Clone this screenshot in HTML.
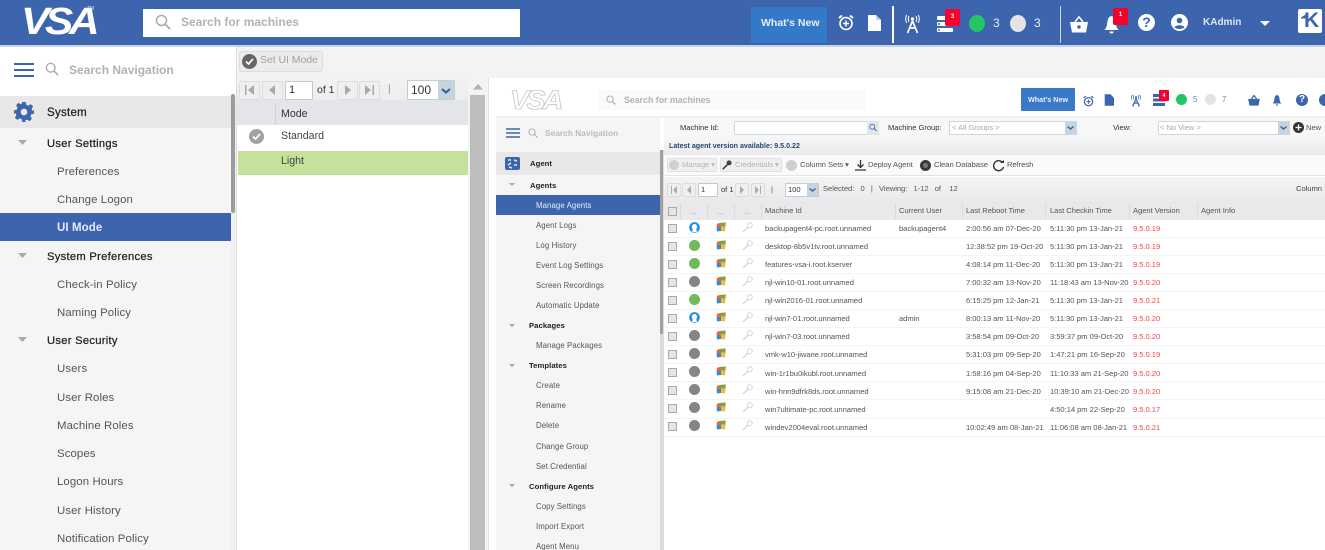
<!DOCTYPE html>
<html><head><meta charset="utf-8"><title>VSA UI Mode</title>
<style>
html,body{margin:0;padding:0;width:1325px;height:550px;overflow:hidden;background:#fff}
body{font-family:"Liberation Sans",sans-serif;position:relative}
#all{position:absolute;left:0;top:0;width:1325px;height:550px;overflow:hidden;filter:blur(.25px)}
#inner{position:absolute;left:0;top:0;width:1325px;height:550px;overflow:hidden;filter:blur(.38px)}
.b{position:absolute}
.t{position:absolute;white-space:nowrap;line-height:16px;height:16px}
.n{font-size:11.4px;color:#555;letter-spacing:.1px;margin-top:1px}
.h{font-size:11.2px;color:#222;font-weight:500;letter-spacing:.28px;-webkit-text-stroke:.25px #222;margin-top:1px}
.i{font-size:7.8px;color:#555;letter-spacing:.1px}
.ih{font-size:7.7px;color:#222;font-weight:bold;letter-spacing:.05px}
.s{font-size:7.6px;color:#555;letter-spacing:-.04px}
.v{color:#f2454a}
svg{position:absolute;overflow:visible}
.pb{position:absolute;background:#efefef;border:1px solid #ddd;border-radius:2px;box-sizing:border-box}
.rowi{position:absolute;left:664px;width:661px;height:1px;background:#f4f4f4}
.cb{position:absolute;left:668px;width:9px;height:9px;background:#e4e4e4;border:1px solid #aaa;box-sizing:border-box}
.dot{position:absolute;left:689px;width:11px;height:11px;border-radius:50%}
.sep{position:absolute;top:203px;width:1px;height:17px;background:#dcdcde}
#rows .t{margin-top:1px}
#rows .cb{margin-top:-1px}
</style></head>
<body>
<svg width="0" height="0" style="position:absolute"><defs>
<symbol id="flag" viewBox="0 0 10 10"><path d="M1 1.800 5 .8 5 4.800 .5 5.300Z" fill="#e8683a"/><path d="M5 .8 9.800 .5 9.500 4.500 5 4.800Z" fill="#7fa845"/><path d="M.5 5.300 5 4.800 5 9 1 9.500Z" fill="#3f86d8"/><path d="M5 4.800 9.500 4.500 9 9.500 5 9Z" fill="#f0bd3a"/></symbol>
<symbol id="key" viewBox="0 0 12 12"><circle cx="8.500" cy="3.500" r="2.800" fill="#fff" stroke="#d4d4d4" stroke-width="1"/><path d="M6.500 5.500 1 11" stroke="#d4d4d4" stroke-width="1.400"/></symbol>
<symbol id="mag" viewBox="0 0 16 16"><circle cx="6.500" cy="6.500" r="5" fill="none" stroke="currentColor" stroke-width="1.500"/><path d="M10.200 10.200 15 15" stroke="currentColor" stroke-width="1.800"/></symbol>
<symbol id="user" viewBox="0 0 12 12"><circle cx="6" cy="6" r="5.800" fill="#1d8fe8"/><circle cx="6" cy="5.200" r="3" fill="#fff"/><path d="M3.500 11 4 7.500H8L8.500 11Z" fill="#fff"/></symbol>
</defs></svg>
<div id="all">

<!-- Top bar -->
<div class="b" style="left:0;top:0;width:1325px;height:45px;background:#3c65ae"></div>
<div class="b" style="left:0;top:45px;width:1325px;height:2px;background:#8fa8d2;opacity:.5"></div>
<div class="t" style="left:21px;top:7px;height:30px;line-height:30px;font-size:38px;font-weight:bold;font-style:italic;color:#fff;letter-spacing:-4px;transform-origin:0 50%;transform:scaleX(1.12)">VSA</div>
<div class="t" style="left:87px;top:6px;font-size:5px;line-height:6px;height:6px;color:#d6e0f0">TM</div>
<div class="b" style="left:143px;top:9px;width:377px;height:28px;background:#fff"></div>
<svg style="left:155px;top:14px;color:#aaa" width="16" height="16"><use href="#mag"/></svg>
<div class="t" style="left:181px;top:14px;font-size:12px;font-weight:bold;color:#b2b2b2">Search for machines</div>

<div class="b" style="left:751px;top:7px;width:76px;height:36px;background:#3478c8;border-radius:1px"></div>
<div class="t" style="left:761px;top:15px;font-size:10.500px;font-weight:bold;color:#e8effa">What's New</div>
<svg style="left:838px;top:14px" width="16" height="17" viewBox="0 0 16 17"><circle cx="8" cy="9.500" r="6" fill="none" stroke="#fff" stroke-width="1.600"/><path d="M8 6.500v6M5 9.500h6" stroke="#fff" stroke-width="1.500"/><path d="M1 4 4 1.500M15 4 12 1.500" stroke="#fff" stroke-width="1.800"/></svg>
<svg style="left:867px;top:15px" width="14" height="16" viewBox="0 0 14 16"><path d="M1 0H9L14 5V16H1Z" fill="#fff"/><path d="M9 0V5H14" fill="#c6d3e9"/></svg>
<div class="b" style="left:892px;top:6px;width:1.500px;height:37px;background:#fff"></div>
<svg style="left:905px;top:14px" width="15" height="20" viewBox="0 0 15 20"><path d="M7.500 7 2.500 19M7.500 7l5 12M4.500 14h6" stroke="#fff" stroke-width="1.700" fill="none"/><circle cx="7.500" cy="5" r="1.700" fill="#fff"/><path d="M4 2Q2.700 5 4 8M11 2Q12.300 5 11 8M1.700 1Q-.3 5 1.700 9M13.300 1Q15.300 5 13.300 9" stroke="#fff" fill="none" stroke-width="1"/></svg>
<svg style="left:937px;top:16px" width="16" height="17" viewBox="0 0 16 17"><rect y="0" width="16" height="4" rx="1" fill="#fff"/><rect y="6" width="16" height="4" rx="1" fill="#fff"/><rect y="12" width="16" height="4" rx="1" fill="#fff"/><circle cx="2" cy="8" r="1" fill="#3c65ae"/><circle cx="2" cy="14" r="1" fill="#3c65ae"/></svg>
<div class="b" style="left:945px;top:9px;width:15px;height:17px;background:#f5002f;border-radius:2px"></div>
<div class="t" style="left:945px;top:10px;width:15px;text-align:center;font-size:6px;font-weight:bold;color:#fff;line-height:14px">3</div>
<div class="b" style="left:969px;top:15px;width:16px;height:17px;border-radius:50%;background:#22c662"></div>
<div class="t" style="left:993px;top:15px;font-size:12px;color:#e8effa">3</div>
<div class="b" style="left:1010px;top:15px;width:16px;height:17px;border-radius:50%;background:#e4e4e4"></div>
<div class="t" style="left:1034px;top:15px;font-size:12px;color:#e8effa">3</div>
<div class="b" style="left:1060px;top:6px;width:1px;height:37px;background:#c9d6ec"></div>
<svg style="left:1070px;top:16px" width="18" height="17" viewBox="0 0 18 17"><path d="M0 6H18L16 16.500H2Z" fill="#fff"/><path d="M5 6 9 .8 13 6" fill="none" stroke="#fff" stroke-width="1.500"/><circle cx="9" cy="11" r="1.700" fill="#3c65ae"/></svg>
<svg style="left:1104px;top:16px" width="15" height="18" viewBox="0 0 15 18"><path d="M7.500 0C3.500 1 3.500 5 3 9 2.700 11 1.500 12.500.5 14H14.500C13.500 12.500 12.300 11 12 9 11.500 5 11.500 1 7.500 0Z" fill="#fff"/><path d="M5.500 15.500a2 2 0 0 0 4 0Z" fill="#fff"/></svg>
<div class="b" style="left:1113px;top:8px;width:15px;height:17px;background:#f5002f;border-radius:2px"></div>
<div class="t" style="left:1113px;top:8px;width:15px;text-align:center;font-size:6px;font-weight:bold;color:#fff;line-height:15px">1</div>
<div class="b" style="left:1138px;top:14px;width:17px;height:17px;border-radius:50%;background:#fff"></div>
<div class="t" style="left:1138px;top:14px;width:17px;text-align:center;font-size:14px;font-weight:bold;color:#3c65ae;line-height:17px;height:17px">?</div>
<svg style="left:1171px;top:14px" width="17" height="17" viewBox="0 0 17 17"><circle cx="8.500" cy="8.500" r="8.500" fill="#fff"/><circle cx="8.500" cy="6.500" r="2.800" fill="#3c65ae"/><path d="M3.500 13.500C4.500 10.500 12.500 10.500 13.500 13.500 11 15.500 6 15.500 3.500 13.500Z" fill="#3c65ae"/></svg>
<div class="t" style="left:1203px;top:15px;font-size:10px;font-weight:bold;color:#dfe7f4">KAdmin</div>
<svg style="left:1260px;top:21px" width="10" height="6"><path d="M0 0H10L5 5Z" fill="#fff"/></svg>
<div class="b" style="left:1298px;top:9px;width:24px;height:24px;background:#fff;border-radius:2px"></div>
<svg style="left:1301px;top:14px" width="6" height="5"><path d="M0 3.500 5.500 0V4.500H0Z" fill="#3c65ae"/></svg>
<div class="t" style="left:1304px;top:11px;height:20px;line-height:20px;font-size:21px;font-weight:bold;color:#3c65ae">K</div>

<!-- Left nav -->
<div class="b" style="left:0;top:47px;width:231px;height:503px;background:#f5f5f5"></div>
<div class="b" style="left:0;top:47px;width:236px;height:49px;background:#fff"></div>
<svg style="left:14px;top:63px" width="20" height="14"><path d="M0 1H20M0 7H20M0 13H20" stroke="#3c65ae" stroke-width="2"/></svg>
<svg style="left:45px;top:62px;color:#aaa" width="14" height="14"><use href="#mag"/></svg>
<div class="t" style="left:69px;top:62px;font-size:12px;font-weight:bold;color:#b2b2b2">Search Navigation</div>
<div class="b" style="left:0;top:96px;width:231px;height:32px;background:#e8e8e8"></div>
<svg style="left:14px;top:102px" width="20" height="20" viewBox="0 0 24 24"><path fill="#3c65ae" fill-rule="evenodd" d="M10 0h4l.7 3.300 2.500 1 2.900-1.800 2.800 2.800-1.800 2.900 1 2.500L24 10v4l-3.300.7-1 2.500 1.800 2.900-2.800 2.800-2.900-1.800-2.500 1L14 24h-4l-.7-3.300-2.500-1-2.900 1.800-2.800-2.800 1.800-2.900-1-2.500L0 14v-4l3.300-.7 1-2.500L2.500 3.900 5.300 1.100l2.900 1.800 1.100-.9ZM12 8a4 4 0 1 0 0 8 4 4 0 0 0 0-8Z"/></svg>
<div class="t h" style="left:47px;top:104px;font-size:11.500px">System</div>
<svg style="left:18px;top:140px" width="9" height="5"><path d="M0 0H9L4.500 5Z" fill="#aaa"/></svg>
<div class="t h" style="left:47px;top:135px">User Settings</div>
<div class="t n" style="left:57px;top:163px">Preferences</div>
<div class="t n" style="left:57px;top:191px">Change Logon</div>
<div class="b" style="left:0;top:213px;width:231px;height:28px;background:#3c65ae"></div>
<div class="t n" style="left:57px;top:219px;color:#e4ebf7;font-weight:bold;font-size:11.500px">UI Mode</div>
<svg style="left:18px;top:253px" width="9" height="5"><path d="M0 0H9L4.500 5Z" fill="#aaa"/></svg>
<div class="t h" style="left:47px;top:248px">System Preferences</div>
<div class="t n" style="left:57px;top:276px">Check-in Policy</div>
<div class="t n" style="left:57px;top:304px">Naming Policy</div>
<svg style="left:18px;top:337px" width="9" height="5"><path d="M0 0H9L4.500 5Z" fill="#aaa"/></svg>
<div class="t h" style="left:47px;top:332px">User Security</div>
<div class="t n" style="left:57px;top:360px">Users</div>
<div class="t n" style="left:57px;top:389px">User Roles</div>
<div class="t n" style="left:57px;top:417px">Machine Roles</div>
<div class="t n" style="left:57px;top:445px">Scopes</div>
<div class="t n" style="left:57px;top:473px">Logon Hours</div>
<div class="t n" style="left:57px;top:502px">User History</div>
<div class="t n" style="left:57px;top:530px">Notification Policy</div>
<div class="b" style="left:231px;top:96px;width:5px;height:454px;background:#f0f0f0"></div>
<div class="b" style="left:231px;top:94px;width:4px;height:119px;background:#9c9c9c;border-radius:2px"></div>

<!-- Middle panel -->
<div class="b" style="left:236px;top:47px;width:1089px;height:31px;background:#f3f3f3"></div>
<div class="b" style="left:236px;top:47px;width:1px;height:503px;background:#ddd"></div>
<div class="b" style="left:239px;top:51px;width:84px;height:21px;background:#ececec;border:1px solid #dcdcdc;border-radius:3px;box-sizing:border-box"></div>
<div class="b" style="left:242px;top:54px;width:15px;height:15px;border-radius:50%;background:#666"></div>
<svg style="left:245px;top:58px" width="9" height="7"><path d="M1 3.500 3.500 6 8 1" stroke="#fff" stroke-width="1.700" fill="none"/></svg>
<div class="t" style="left:260px;top:52px;font-size:10.500px;color:#a0a0a0;letter-spacing:-.05px">Set UI Mode</div>

<div class="b" style="left:237px;top:78px;width:233px;height:47px;background:linear-gradient(#f2f2f2,#e8e8ea)"></div>
<div class="pb" style="left:239px;top:81px;width:21px;height:19px"></div>
<div class="pb" style="left:262px;top:81px;width:21px;height:19px"></div>
<div class="pb" style="left:337px;top:81px;width:21px;height:19px"></div>
<div class="pb" style="left:359px;top:81px;width:21px;height:19px"></div>
<svg style="left:245px;top:85px" width="10" height="11"><path d="M0 0H1.500V10H0ZM9 0V10L3 5Z" fill="#a8a8a8"/></svg>
<svg style="left:269px;top:85px" width="7" height="11"><path d="M6 0V10L0 5Z" fill="#a8a8a8"/></svg>
<svg style="left:345px;top:85px" width="7" height="11"><path d="M0 0V10L6 5Z" fill="#a8a8a8"/></svg>
<svg style="left:365px;top:85px" width="10" height="11"><path d="M0 0V10L6 5ZM7.500 0H9V10H7.500Z" fill="#a8a8a8"/></svg>
<div class="b" style="left:285px;top:81px;width:28px;height:19px;background:#fff;border:1px solid #c8c8c8;box-sizing:border-box"></div>
<div class="t" style="left:289px;top:82px;font-size:11px;color:#333">1</div>
<div class="t" style="left:317px;top:82px;font-size:10.500px;color:#333">of 1</div>
<div class="t" style="left:388px;top:82px;font-size:10px;color:#888">|</div>
<div class="b" style="left:407px;top:80px;width:48px;height:20px;background:#fff;border:1px solid #c3cdd8;box-sizing:border-box"></div>
<div class="b" style="left:438px;top:81px;width:16px;height:18px;background:#c8d4dd"></div>
<svg style="left:441px;top:88px" width="10" height="6"><path d="M1 1 5 4.500 9 1" stroke="#2a5ea8" stroke-width="2" fill="none"/></svg>
<div class="t" style="left:411px;top:82px;font-size:12px;color:#333">100</div>
<div class="b" style="left:238px;top:100px;width:230px;height:25px;background:#e4e5e8"></div>
<div class="b" style="left:275px;top:103px;width:1px;height:22px;background:#d2d2d4"></div>
<div class="t" style="left:281px;top:106px;font-size:10.600px;color:#333">Mode</div>
<div class="b" style="left:238px;top:125px;width:230px;height:26px;background:#fff"></div>
<div class="b" style="left:249px;top:129px;width:15px;height:15px;border-radius:50%;background:#a2a2a2"></div>
<svg style="left:252px;top:133px" width="9" height="7"><path d="M1 3.500 3.500 6 8 1" stroke="#fff" stroke-width="1.700" fill="none"/></svg>
<div class="t" style="left:281px;top:128px;font-size:10.600px;color:#444">Standard</div>
<div class="b" style="left:238px;top:151px;width:230px;height:24px;background:#c4e29b"></div>
<div class="t" style="left:281px;top:153px;font-size:10.600px;color:#444">Light</div>
<div class="b" style="left:238px;top:175px;width:230px;height:375px;background:#fff"></div>
<div class="b" style="left:468px;top:78px;width:20px;height:472px;background:#f3f3f3"></div>
<svg style="left:473px;top:84px" width="10" height="6"><path d="M0 5.500 5 0 10 5.500Z" fill="#b0b0b0"/></svg>
<div class="b" style="left:470px;top:95px;width:15px;height:455px;background:#bdbdbd"></div>
<div class="b" style="left:488px;top:78px;width:1px;height:472px;background:#dfdfdf"></div>
<div class="b" style="left:489px;top:78px;width:836px;height:472px;background:#fff"></div>

<div id="inner">
<!-- Inner top -->
<div class="t" style="left:510px;top:88px;height:24px;line-height:24px;font-size:27px;font-weight:bold;font-style:italic;color:#fff;letter-spacing:-3px;-webkit-text-stroke:.8px #c8c8c8;transform-origin:0 50%;transform:scaleX(1.08)">VSA</div>
<div class="b" style="left:598px;top:90px;width:268px;height:20px;background:#fafafa"></div>
<svg style="left:606px;top:95px;color:#aaa" width="10" height="10"><use href="#mag"/></svg>
<div class="t" style="left:624px;top:92px;font-size:8.800px;font-weight:bold;color:#b2b2b2">Search for machines</div>
<div class="b" style="left:1021px;top:88px;width:54px;height:23px;background:#3a78c8;border-radius:1px"></div>
<div class="t" style="left:1028px;top:92px;font-size:7.200px;font-weight:bold;color:#e8effa">What's New</div>
<svg style="left:1083px;top:95px" width="11" height="12" viewBox="0 0 16 17"><circle cx="8" cy="9.500" r="6" fill="none" stroke="#3c65ae" stroke-width="1.800"/><path d="M8 6.500v6M5 9.500h6" stroke="#3c65ae" stroke-width="1.500"/><path d="M1 4 4 1.500M15 4 12 1.500" stroke="#3c65ae" stroke-width="1.800"/></svg>
<svg style="left:1104px;top:94px" width="10" height="12" viewBox="0 0 14 16"><path d="M1 0H9L14 5V16H1Z" fill="#3c65ae"/></svg>
<svg style="left:1131px;top:94px" width="10" height="13" viewBox="0 0 15 20"><path d="M7.500 7 2.500 19M7.500 7l5 12M4.500 14h6" stroke="#3c65ae" stroke-width="2" fill="none"/><circle cx="7.500" cy="5" r="1.700" fill="#3c65ae"/><path d="M4 2Q2.700 5 4 8M11 2Q12.300 5 11 8M1.700 1Q-.3 5 1.700 9M13.300 1Q15.300 5 13.300 9" stroke="#3c65ae" fill="none" stroke-width="1.200"/></svg>
<svg style="left:1153px;top:94px" width="12" height="12" viewBox="0 0 16 16"><rect y="0" width="16" height="4" fill="#3c65ae"/><rect y="6" width="16" height="4" fill="#3c65ae"/><rect y="12" width="16" height="4" fill="#3c65ae"/></svg>
<div class="b" style="left:1159px;top:90px;width:10px;height:11px;background:#f5002f;border-radius:1px"></div>
<div class="t" style="left:1159px;top:88px;width:10px;text-align:center;font-size:5px;font-weight:bold;color:#fff">4</div>
<div class="b" style="left:1176px;top:94px;width:11px;height:11px;border-radius:50%;background:#22c662"></div>
<div class="t" style="left:1193px;top:92px;font-size:8px;color:#6a86bb">5</div>
<div class="b" style="left:1205px;top:94px;width:11px;height:11px;border-radius:50%;background:#e4e4e4"></div>
<div class="t" style="left:1222px;top:92px;font-size:8px;color:#6a86bb">7</div>
<svg style="left:1248px;top:95px" width="12" height="11" viewBox="0 0 18 17"><path d="M0 6H18L16 16.500H2Z" fill="#3c65ae"/><path d="M5 6 9 .8 13 6" fill="none" stroke="#3c65ae" stroke-width="2"/></svg>
<svg style="left:1272px;top:95px" width="10" height="11" viewBox="0 0 15 18"><path d="M7.500 0C3.500 1 3.500 5 3 9 2.700 11 1.500 12.500.5 14H14.500C13.500 12.500 12.300 11 12 9 11.500 5 11.500 1 7.500 0Z" fill="#3c65ae"/><path d="M5.500 15.500a2 2 0 0 0 4 0Z" fill="#3c65ae"/></svg>
<div class="b" style="left:1296px;top:94px;width:12px;height:12px;border-radius:50%;background:#3c65ae"></div>
<div class="t" style="left:1296px;top:92px;width:12px;text-align:center;font-size:10px;font-weight:bold;color:#fff">?</div>
<div class="b" style="left:1319px;top:94px;width:12px;height:12px;border-radius:50%;background:#3c65ae"></div>
<div class="b" style="left:496px;top:116px;width:829px;height:2px;background:#f1f1f1"></div>

<!-- Inner nav -->
<div class="b" style="left:496px;top:118px;width:164px;height:432px;background:#f5f5f5"></div>
<svg style="left:506px;top:128px" width="14" height="10"><path d="M0 1H14M0 5H14M0 9H14" stroke="#3c65ae" stroke-width="1.500"/></svg>
<svg style="left:528px;top:128px;color:#aaa" width="10" height="10"><use href="#mag"/></svg>
<div class="t" style="left:545px;top:125px;font-size:8.400px;font-weight:bold;color:#bbb">Search Navigation</div>
<div class="b" style="left:496px;top:152px;width:164px;height:23px;background:#e8e8e8"></div>
<div class="b" style="left:505px;top:157px;width:15px;height:13px;background:#3c65ae;border-radius:2px"></div>
<svg style="left:505px;top:157px" width="15" height="13"><path d="M3 3H6M9 3 12 4M3 8 6 6M9 8H12M4 10 7 11" stroke="#dfe7f5" stroke-width="1.500"/></svg>
<div class="t ih" style="left:530px;top:156px">Agent</div>
<svg style="left:509px;top:183px" width="6" height="3"><path d="M0 0H6L3 3Z" fill="#aaa"/></svg>
<div class="t ih" style="left:530px;top:178px">Agents</div>
<div class="b" style="left:496px;top:195px;width:164px;height:20px;background:#3c65ae"></div>
<div class="t i" style="left:536px;top:198px;color:#e4ebf7">Manage Agents</div>
<div class="t i" style="left:536px;top:218px">Agent Logs</div>
<div class="t i" style="left:536px;top:238px">Log History</div>
<div class="t i" style="left:536px;top:258px">Event Log Settings</div>
<div class="t i" style="left:536px;top:278px">Screen Recordings</div>
<div class="t i" style="left:536px;top:298px">Automatic Update</div>
<svg style="left:509px;top:324px" width="6" height="3"><path d="M0 0H6L3 3Z" fill="#aaa"/></svg>
<div class="t ih" style="left:529px;top:318px">Packages</div>
<div class="t i" style="left:536px;top:338px">Manage Packages</div>
<svg style="left:509px;top:364px" width="6" height="3"><path d="M0 0H6L3 3Z" fill="#aaa"/></svg>
<div class="t ih" style="left:529px;top:358px">Templates</div>
<div class="t i" style="left:536px;top:378px">Create</div>
<div class="t i" style="left:536px;top:398px">Rename</div>
<div class="t i" style="left:536px;top:418px">Delete</div>
<div class="t i" style="left:536px;top:439px">Change Group</div>
<div class="t i" style="left:536px;top:459px">Set Credential</div>
<svg style="left:509px;top:484px" width="6" height="3"><path d="M0 0H6L3 3Z" fill="#aaa"/></svg>
<div class="t ih" style="left:529px;top:479px">Configure Agents</div>
<div class="t i" style="left:536px;top:499px">Copy Settings</div>
<div class="t i" style="left:536px;top:519px">Import Export</div>
<div class="t i" style="left:536px;top:539px">Agent Menu</div>
<div class="b" style="left:660px;top:150px;width:4px;height:400px;background:#dcdcdc"></div>
<div class="b" style="left:660px;top:150px;width:3px;height:184px;background:#a0a0a0"></div>

<!-- Filter bar -->
<div class="b" style="left:664px;top:118px;width:661px;height:20px;background:#f7f7f7"></div>
<div class="t s" style="left:680px;top:120px;color:#333">Machine Id:</div>
<div class="b" style="left:734px;top:121px;width:134px;height:14px;background:#fff;border:1px solid #cdd5de;box-sizing:border-box"></div>
<div class="b" style="left:867px;top:121px;width:12px;height:14px;background:#dfe6ed"></div>
<svg style="left:869px;top:123px;color:#2a5ea8" width="8" height="9"><use href="#mag"/></svg>
<div class="t s" style="left:888px;top:120px;color:#333">Machine Group:</div>
<div class="b" style="left:949px;top:121px;width:128px;height:14px;background:#fff;border:1px solid #cdd5de;box-sizing:border-box"></div>
<div class="b" style="left:1065px;top:122px;width:11px;height:12px;background:#c8d4dd"></div>
<svg style="left:1067px;top:126px" width="7" height="4"><path d="M.5 .5 3.500 3 6.500 .5" stroke="#2a5ea8" stroke-width="1.300" fill="none"/></svg>
<div class="t s" style="left:952px;top:120px;color:#aaa">&lt; All Groups &gt;</div>
<div class="t s" style="left:1113px;top:120px;color:#333">View:</div>
<div class="b" style="left:1158px;top:121px;width:132px;height:14px;background:#fff;border:1px solid #cdd5de;box-sizing:border-box"></div>
<div class="b" style="left:1278px;top:122px;width:11px;height:12px;background:#c8d4dd"></div>
<svg style="left:1280px;top:126px" width="7" height="4"><path d="M.5 .5 3.500 3 6.500 .5" stroke="#2a5ea8" stroke-width="1.300" fill="none"/></svg>
<div class="t s" style="left:1160px;top:120px;color:#aaa">&lt; No View &gt;</div>
<div class="b" style="left:1293px;top:122px;width:11px;height:11px;border-radius:50%;background:#333"></div>
<svg style="left:1295px;top:124px" width="7" height="7"><path d="M3.500 .5v6M.5 3.500h6" stroke="#fff" stroke-width="1.300"/></svg>
<div class="t s" style="left:1306px;top:120px">New</div>

<div class="b" style="left:664px;top:138px;width:661px;height:17px;background:linear-gradient(#f5f6f7,#e8eaec)"></div>
<div class="t" style="left:669px;top:138px;font-size:7.100px;font-weight:bold;color:#27476f">Latest agent version available: 9.5.0.22</div>

<div class="b" style="left:664px;top:155px;width:661px;height:20px;background:#fafafa"></div>
<div class="b" style="left:664px;top:175px;width:661px;height:1px;background:#e4e4e4"></div>
<div class="b" style="left:667px;top:158px;width:50px;height:14px;background:#f0f0f0;border:1px solid #e0e0e0;border-radius:2px;box-sizing:border-box"></div>
<div class="b" style="left:720px;top:158px;width:62px;height:14px;background:#f0f0f0;border:1px solid #e0e0e0;border-radius:2px;box-sizing:border-box"></div>
<div class="b" style="left:669px;top:160px;width:10px;height:10px;border-radius:50%;background:#cfcfcf"></div>
<div class="t s" style="left:682px;top:157px;color:#b4b4b4">Manage ▾</div>
<svg style="left:722px;top:160px" width="10" height="10" viewBox="0 0 12 12"><circle cx="8.500" cy="3.500" r="3" fill="#444"/><path d="M6.500 5.500 1 11" stroke="#444" stroke-width="2"/></svg>
<div class="t s" style="left:735px;top:157px;color:#b4b4b4">Credentials ▾</div>
<div class="b" style="left:786px;top:160px;width:11px;height:11px;border-radius:50%;background:#cfcfcf"></div>
<div class="t s" style="left:800px;top:157px">Column Sets ▾</div>
<svg style="left:855px;top:160px" width="11" height="11"><path d="M5.500 0V7M2.500 4.500 5.500 7.500 8.500 4.500M0 10H11" stroke="#333" stroke-width="1.300" fill="none"/></svg>
<div class="t s" style="left:868px;top:157px">Deploy Agent</div>
<div class="b" style="left:920px;top:160px;width:11px;height:11px;border-radius:50%;background:#777;border:3px solid #3a3a3a;box-sizing:border-box"></div>
<div class="t s" style="left:934px;top:157px">Clean Database</div>
<svg style="left:993px;top:160px" width="11" height="12"><path d="M9.500 2.500A5 5 0 1 0 10.500 7" stroke="#333" stroke-width="1.400" fill="none"/><path d="M7 3H11V0Z" fill="#333"/></svg>
<div class="t s" style="left:1007px;top:157px">Refresh</div>

<div class="b" style="left:664px;top:177px;width:661px;height:26px;background:linear-gradient(#f4f4f4,#e9e9eb)"></div>
<div class="pb" style="left:667px;top:183px;width:14px;height:14px"></div>
<div class="pb" style="left:682px;top:183px;width:14px;height:14px"></div>
<div class="pb" style="left:735px;top:183px;width:14px;height:14px"></div>
<div class="pb" style="left:751px;top:183px;width:14px;height:14px"></div>
<svg style="left:671px;top:186px" width="7" height="8"><path d="M0 0H1V8H0ZM6 0V8L2 4Z" fill="#aaa"/></svg>
<svg style="left:687px;top:186px" width="5" height="8"><path d="M4 0V8L0 4Z" fill="#aaa"/></svg>
<svg style="left:740px;top:186px" width="5" height="8"><path d="M0 0V8L4 4Z" fill="#aaa"/></svg>
<svg style="left:755px;top:186px" width="7" height="8"><path d="M0 0V8L4 4ZM5 0H6V8H5Z" fill="#aaa"/></svg>
<div class="b" style="left:698px;top:183px;width:20px;height:14px;background:#fff;border:1px solid #c8c8c8;box-sizing:border-box"></div>
<div class="t s" style="left:701px;top:182px;color:#333">1</div>
<div class="t s" style="left:721px;top:182px;color:#333">of 1</div>
<div class="t s" style="left:771px;top:182px">|</div>
<div class="b" style="left:785px;top:183px;width:34px;height:14px;background:#fff;border:1px solid #c3cdd8;box-sizing:border-box"></div>
<div class="b" style="left:807px;top:184px;width:11px;height:12px;background:#c8d4dd"></div>
<svg style="left:809px;top:188px" width="7" height="4"><path d="M.5 .5 3.500 3 6.500 .5" stroke="#2a5ea8" stroke-width="1.300" fill="none"/></svg>
<div class="t s" style="left:788px;top:182px;color:#333">100</div>
<div class="t s" style="left:823px;top:181px">Selected:&nbsp;&nbsp; 0&nbsp;&nbsp; |&nbsp;&nbsp; Viewing:&nbsp;&nbsp; 1-12&nbsp;&nbsp; of&nbsp;&nbsp;&nbsp; 12</div>
<div class="t s" style="left:1296px;top:181px;color:#444">Column</div>

<!-- Grid header -->
<div class="b" style="left:664px;top:203px;width:661px;height:17px;background:#e9e9eb"></div>
<div class="sep" style="left:680px"></div><div class="sep" style="left:707px"></div><div class="sep" style="left:734px"></div><div class="sep" style="left:761px"></div><div class="sep" style="left:895px"></div><div class="sep" style="left:962px"></div><div class="sep" style="left:1045px"></div><div class="sep" style="left:1129px"></div><div class="sep" style="left:1197px"></div>
<div class="cb" style="top:207px"></div>
<div class="t s" style="left:690px;top:204px;color:#999">...</div><div class="t s" style="left:717px;top:204px;color:#999">...</div><div class="t s" style="left:744px;top:204px;color:#999">...</div>
<div class="t s" style="left:765px;top:203px">Machine Id</div>
<div class="t s" style="left:899px;top:203px">Current User</div>
<div class="t s" style="left:966px;top:203px">Last Reboot Time</div>
<div class="t s" style="left:1050px;top:203px">Last Checkin Time</div>
<div class="t s" style="left:1133px;top:203px">Agent Version</div>
<div class="t s" style="left:1201px;top:203px">Agent Info</div>

<!-- Rows -->
<div id="rows">
<div class="rowi" style="top:237px"></div><div class="rowi" style="top:255px"></div><div class="rowi" style="top:273px"></div><div class="rowi" style="top:291px"></div><div class="rowi" style="top:309px"></div><div class="rowi" style="top:327px"></div><div class="rowi" style="top:345px"></div><div class="rowi" style="top:363px"></div><div class="rowi" style="top:381px"></div><div class="rowi" style="top:399px"></div><div class="rowi" style="top:418px"></div><div class="rowi" style="top:436px"></div>

<div class="cb" style="top:225px"></div><svg style="left:689px;top:222px" width="11" height="11"><use href="#user"/></svg><svg style="left:716px;top:222px" width="10" height="10"><use href="#flag"/></svg><svg style="left:742px;top:222px" width="11" height="11"><use href="#key"/></svg>
<div class="t s" style="left:765px;top:220px">backupagent4-pc.root.unnamed</div><div class="t s" style="left:899px;top:220px">backupagent4</div><div class="t s" style="left:966px;top:220px">2:00:56 am 07-Dec-20</div><div class="t s" style="left:1050px;top:220px">5:11:30 pm 13-Jan-21</div><div class="t s v" style="left:1133px;top:220px">9.5.0.19</div>

<div class="cb" style="top:243px"></div><div class="dot" style="top:240px;background:#6fba5b"></div><svg style="left:716px;top:240px" width="10" height="10"><use href="#flag"/></svg><svg style="left:742px;top:240px" width="11" height="11"><use href="#key"/></svg>
<div class="t s" style="left:765px;top:238px">desktop-8b5v1tv.root.unnamed</div><div class="t s" style="left:966px;top:238px">12:38:52 pm 19-Oct-20</div><div class="t s" style="left:1050px;top:238px">5:11:30 pm 13-Jan-21</div><div class="t s v" style="left:1133px;top:238px">9.5.0.19</div>

<div class="cb" style="top:261px"></div><div class="dot" style="top:258px;background:#6fba5b"></div><svg style="left:716px;top:258px" width="10" height="10"><use href="#flag"/></svg><svg style="left:742px;top:258px" width="11" height="11"><use href="#key"/></svg>
<div class="t s" style="left:765px;top:256px">features-vsa-i.root.kserver</div><div class="t s" style="left:966px;top:256px">4:08:14 pm 11-Dec-20</div><div class="t s" style="left:1050px;top:256px">5:11:30 pm 13-Jan-21</div><div class="t s v" style="left:1133px;top:256px">9.5.0.19</div>

<div class="cb" style="top:279px"></div><div class="dot" style="top:276px;background:#858585"></div><svg style="left:716px;top:276px" width="10" height="10"><use href="#flag"/></svg><svg style="left:742px;top:276px" width="11" height="11"><use href="#key"/></svg>
<div class="t s" style="left:765px;top:274px">njl-win10-01.root.unnamed</div><div class="t s" style="left:966px;top:274px">7:00:32 am 13-Nov-20</div><div class="t s" style="left:1050px;top:274px">11:18:43 am 13-Nov-20</div><div class="t s v" style="left:1133px;top:274px">9.5.0.20</div>

<div class="cb" style="top:297px"></div><div class="dot" style="top:294px;background:#6fba5b"></div><svg style="left:716px;top:294px" width="10" height="10"><use href="#flag"/></svg><svg style="left:742px;top:294px" width="11" height="11"><use href="#key"/></svg>
<div class="t s" style="left:765px;top:292px">njl-win2016-01.root.unnamed</div><div class="t s" style="left:966px;top:292px">6:15:25 pm 12-Jan-21</div><div class="t s" style="left:1050px;top:292px">5:11:30 pm 13-Jan-21</div><div class="t s v" style="left:1133px;top:292px">9.5.0.21</div>

<div class="cb" style="top:315px"></div><svg style="left:689px;top:312px" width="11" height="11"><use href="#user"/></svg><svg style="left:716px;top:312px" width="10" height="10"><use href="#flag"/></svg><svg style="left:742px;top:312px" width="11" height="11"><use href="#key"/></svg>
<div class="t s" style="left:765px;top:310px">njl-win7-01.root.unnamed</div><div class="t s" style="left:899px;top:310px">admin</div><div class="t s" style="left:966px;top:310px">8:00:13 am 11-Nov-20</div><div class="t s" style="left:1050px;top:310px">5:11:30 pm 13-Jan-21</div><div class="t s v" style="left:1133px;top:310px">9.5.0.20</div>

<div class="cb" style="top:333px"></div><div class="dot" style="top:330px;background:#858585"></div><svg style="left:716px;top:330px" width="10" height="10"><use href="#flag"/></svg><svg style="left:742px;top:330px" width="11" height="11"><use href="#key"/></svg>
<div class="t s" style="left:765px;top:328px">njl-win7-03.root.unnamed</div><div class="t s" style="left:966px;top:328px">3:58:54 pm 09-Oct-20</div><div class="t s" style="left:1050px;top:328px">3:59:37 pm 09-Oct-20</div><div class="t s v" style="left:1133px;top:328px">9.5.0.20</div>

<div class="cb" style="top:351px"></div><div class="dot" style="top:348px;background:#858585"></div><svg style="left:716px;top:348px" width="10" height="10"><use href="#flag"/></svg><svg style="left:742px;top:348px" width="11" height="11"><use href="#key"/></svg>
<div class="t s" style="left:765px;top:346px">vmk-w10-jiwane.root.unnamed</div><div class="t s" style="left:966px;top:346px">5:31:03 pm 09-Sep-20</div><div class="t s" style="left:1050px;top:346px">1:47:21 pm 16-Sep-20</div><div class="t s v" style="left:1133px;top:346px">9.5.0.19</div>

<div class="cb" style="top:369px"></div><div class="dot" style="top:366px;background:#858585"></div><svg style="left:716px;top:366px" width="10" height="10"><use href="#flag"/></svg><svg style="left:742px;top:366px" width="11" height="11"><use href="#key"/></svg>
<div class="t s" style="left:765px;top:365px">win-1r1bu0ikubl.root.unnamed</div><div class="t s" style="left:966px;top:365px">1:58:16 pm 04-Sep-20</div><div class="t s" style="left:1050px;top:365px">11:10:33 am 21-Sep-20</div><div class="t s v" style="left:1133px;top:365px">9.5.0.20</div>

<div class="cb" style="top:387px"></div><div class="dot" style="top:384px;background:#858585"></div><svg style="left:716px;top:384px" width="10" height="10"><use href="#flag"/></svg><svg style="left:742px;top:384px" width="11" height="11"><use href="#key"/></svg>
<div class="t s" style="left:765px;top:383px">win-hnn9dfrk8ds.root.unnamed</div><div class="t s" style="left:966px;top:383px">9:15:08 am 21-Dec-20</div><div class="t s" style="left:1050px;top:383px">10:39:10 am 21-Dec-20</div><div class="t s v" style="left:1133px;top:383px">9.5.0.20</div>

<div class="cb" style="top:405px"></div><div class="dot" style="top:402px;background:#858585"></div><svg style="left:716px;top:402px" width="10" height="10"><use href="#flag"/></svg><svg style="left:742px;top:402px" width="11" height="11"><use href="#key"/></svg>
<div class="t s" style="left:765px;top:401px">win7ultimate-pc.root.unnamed</div><div class="t s" style="left:1050px;top:401px">4:50:14 pm 22-Sep-20</div><div class="t s v" style="left:1133px;top:401px">9.5.0.17</div>

<div class="cb" style="top:423px"></div><div class="dot" style="top:420px;background:#858585"></div><svg style="left:716px;top:420px" width="10" height="10"><use href="#flag"/></svg><svg style="left:742px;top:420px" width="11" height="11"><use href="#key"/></svg>
<div class="t s" style="left:765px;top:419px">windev2004eval.root.unnamed</div><div class="t s" style="left:966px;top:419px">10:02:49 am 08-Jan-21</div><div class="t s" style="left:1050px;top:419px">11:06:08 am 08-Jan-21</div><div class="t s v" style="left:1133px;top:419px">9.5.0.21</div>
</div>
</div>
</div>
</body></html>
